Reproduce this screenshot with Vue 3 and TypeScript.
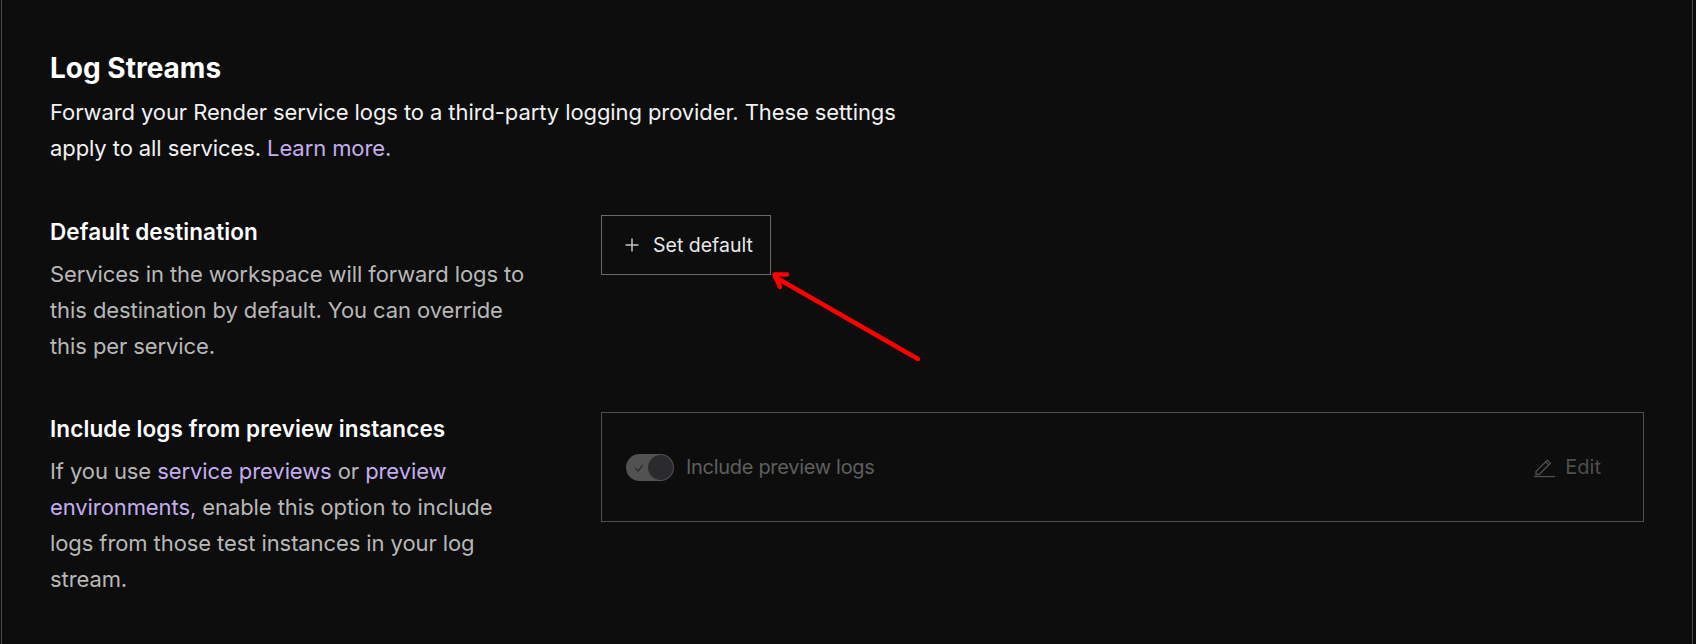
<script setup lang="ts">
</script>

<template>
  <div class="page">
    <main class="panel">
      <header class="intro">
        <h2>Log Streams</h2>
        <p>Forward your Render service logs to a third-party logging provider. These settings apply to all services. <a>Learn more.</a></p>
      </header>

      <section class="row first">
        <div class="info">
          <h3>Default destination</h3>
          <p>Services in the workspace will forward logs to this destination by default. You can override this per service.</p>
        </div>
        <div class="control">
          <button class="set-default" type="button">
            <svg width="16" height="16" viewBox="0 0 16 16" fill="none" stroke="#c4c4c4" stroke-width="1.5"><path d="M8 1.500v13M1.500 8h13" /></svg>
            <span>Set default</span>
          </button>
        </div>
      </section>

      <section class="row second">
        <div class="info">
          <h3>Include logs from preview instances</h3>
          <p>If you use <a>service previews</a> or <a>preview environments,</a> enable this option to include logs from those test instances in your log stream.</p>
        </div>
        <div class="control">
          <div class="preview-box">
            <div class="toggle-wrap">
              <span class="toggle">
                <svg class="check" width="12" height="12" viewBox="0 0 12 12" fill="none" stroke="#2b2b2e" stroke-width="1.2"><path d="M2 6l3 3 5-6" /></svg>
                <span class="knob"></span>
              </span>
              <span class="toggle-label">Include preview logs</span>
            </div>
            <div class="edit">
              <svg width="22" height="22" viewBox="0 0 22 22" fill="none" stroke="#4f4f4f" stroke-width="1.3"><path d="M3 15.500v3h3.200L17.400 7.200 14.300 4.100z" /><path d="M12.600 5.800l3.100 3.100" /><path d="M1 20.600h21" /></svg>
              <span>Edit</span>
            </div>
          </div>
        </div>
      </section>

      <svg class="arrow" width="160" height="100" viewBox="0 0 160 100" fill="none" stroke="#ff0000" stroke-width="4.500" stroke-linecap="round" stroke-linejoin="round">
        <path d="M4 5L147 87" />
        <path d="M16 2.500H3.500L9 15" />
      </svg>
    </main>
  </div>
</template>

<style>
html, body { margin: 0; background: #0d0d0d; }
</style>

<style scoped>
.page {
  width: 1696px;
  height: 644px;
  overflow: hidden;
  background: #0d0d0d;
  font-family: Inter, "Liberation Sans", Arial, sans-serif;
}
.panel {
  position: relative;
  box-sizing: border-box;
  width: 1692px;
  height: 644px;
  margin-left: 1px;
  padding: 50px 0 0 48px;
  border-left: 1px solid #4a4a4a;
  border-right: 1px solid #4a4a4a;
}
h2, h3, p { margin: 0; }
a { color: #c4aeee; }
.intro h2 {
  font-size: 28px;
  line-height: 36px;
  font-weight: 700;
  color: #fff;
}
.intro p {
  width: 890px;
  margin-top: 8px;
  font-size: 22px;
  line-height: 36px;
  letter-spacing: -0.09px;
  color: #f2f2f2;
}
.row {
  display: grid;
  grid-template-columns: 551px 1043px;
}
.first { margin-top: 49px; }
.second { margin-top: 48px; }
.info { padding-top: 2px; }
.info h3 {
  font-size: 22.5px;
  line-height: 30px;
  font-weight: 600;
  letter-spacing: 0.1px;
  color: #fff;
}
.info p {
  width: 480px;
  margin-top: 9px;
  font-size: 22px;
  line-height: 36px;
  letter-spacing: -0.09px;
  color: #b8b8b8;
}
.set-default {
  display: flex;
  align-items: center;
  gap: 13px;
  box-sizing: border-box;
  width: 170px;
  height: 60px;
  padding: 0 0 0 22px;
  background: transparent;
  border: 1px solid #6a6a6a;
  color: #e8e8e8;
  font: inherit;
  font-size: 19.5px;
}
.preview-box {
  display: flex;
  align-items: center;
  justify-content: space-between;
  box-sizing: border-box;
  width: 1043px;
  height: 110px;
  padding: 0 42px 0 24px;
  border: 1px solid #4f4f4f;
  font-size: 20px;
  color: #5f5f5f;
}
.toggle-wrap, .edit {
  display: flex;
  align-items: center;
}
.toggle-wrap { gap: 12px; }
.toggle-label { letter-spacing: -0.3px; }
.edit { gap: 10px; color: #4f4f4f; }
.toggle {
  position: relative;
  display: block;
  width: 48px;
  height: 27px;
  border-radius: 14px;
  background: #525252;
}
.check { position: absolute; left: 7px; top: 8px; }
.knob {
  position: absolute;
  right: 1px;
  top: 1px;
  box-sizing: border-box;
  width: 25px;
  height: 25px;
  border-radius: 50%;
  background: #2b2b2e;
}
.arrow {
  position: absolute;
  left: 769px;
  top: 272px;
}
</style>
